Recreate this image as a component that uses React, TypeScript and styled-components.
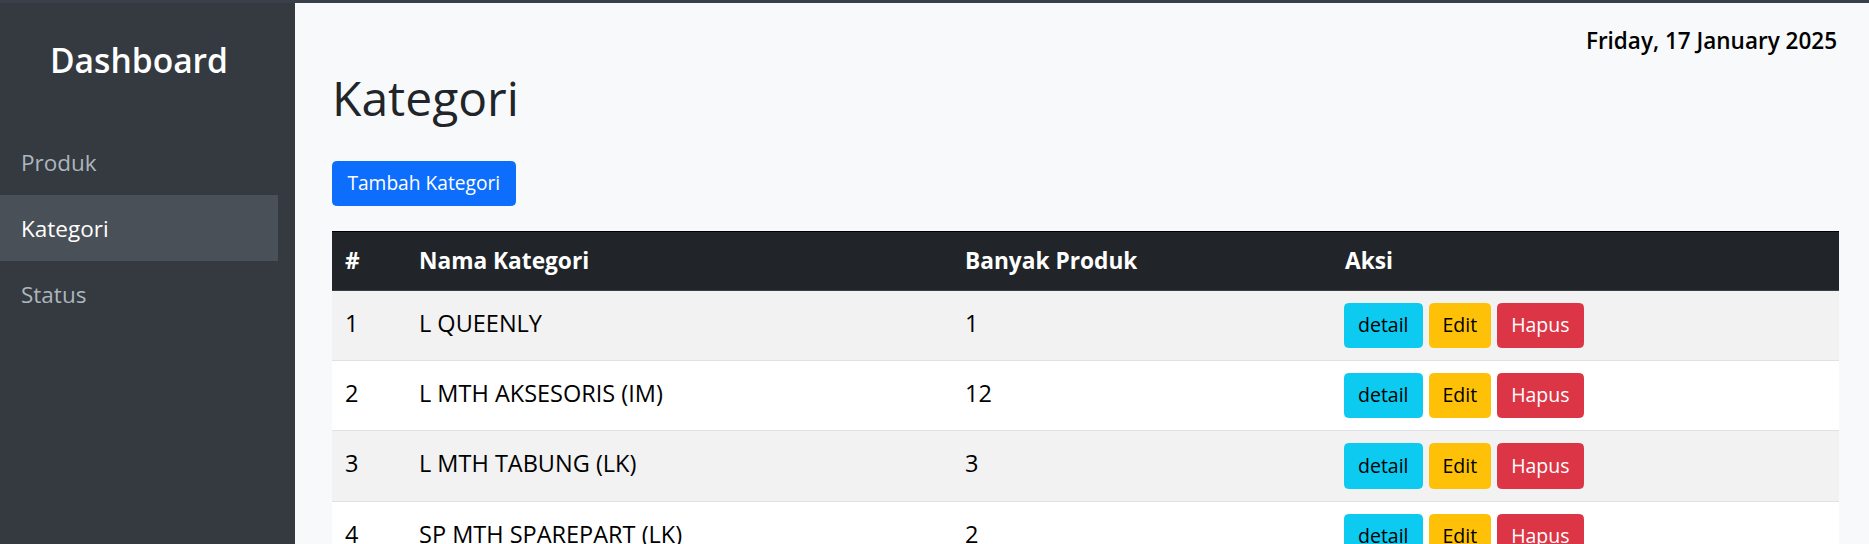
import React from "react";
import styled, { createGlobalStyle } from "styled-components";

const GlobalStyle = createGlobalStyle`
  * { box-sizing: border-box; }
  html, body { margin: 0; padding: 0; }
  body {
    font-family: "Open Sans", "Noto Sans", sans-serif;
    font-size: 19.2px;
    line-height: 1.5;
    color: #212529;
    background: #f8f9fa;
  }
`;

const Page = styled.div`
  display: flex;
  flex-direction: column;
  min-height: 100vh;
`;

const TopStrip = styled.div`
  height: 3px;
  background: #3a404a;
  flex: none;
`;

const Body = styled.div`
  display: flex;
  flex: 1;
`;

const Sidebar = styled.aside`
  width: 295px;
  flex: none;
  background: #343a40;
  padding: 34px 17px 0 0;
`;

const Brand = styled.h2`
  margin: 0 0 46px;
  height: 46px;
  font-size: 33.6px;
  line-height: 46px;
  font-weight: 600;
  color: #fff;
  text-align: center;
`;

const Nav = styled.nav`
  display: flex;
  flex-direction: column;
`;

const NavItem = styled.a<{ $active?: boolean }>`
  display: block;
  padding: 16px 0 14px 21px;
  font-size: 22.5px;
  line-height: 36px;
  text-decoration: none;
  color: ${(p) => (p.$active ? "#ffffff" : "#adb5bd")};
  background: ${(p) => (p.$active ? "#495057" : "transparent")};
`;

const Main = styled.main`
  flex: 1;
  min-width: 0;
  background: #f8f9fa;
  padding: 24px 30px 0 37px;
`;

const DateLine = styled.h5`
  margin: 0;
  text-align: right;
  font-size: 22.5px;
  line-height: 28.8px;
  font-weight: 600;
  color: #000;
  padding-right: 2px;
`;

const Title = styled.h1`
  margin: 13px 0 35px;
  font-size: 48px;
  line-height: 1.2;
  font-weight: 500;
  color: #212529;
`;

type Variant = "primary" | "info" | "warning" | "danger";
const variantColor: Record<Variant, string> = {
  primary: "#0d6efd",
  info: "#0dcaf0",
  warning: "#ffc107",
  danger: "#dc3545",
};

const Btn = styled.button<{ $variant: Variant }>`
  display: inline-block;
  font-family: inherit;
  font-size: 19.5px;
  line-height: 28.8px;
  padding: 7.2px 13px;
  border-radius: 4.5px;
  border: 1px solid ${(p) => variantColor[p.$variant]};
  background: ${(p) => variantColor[p.$variant]};
  color: ${(p) => (p.$variant === "primary" || p.$variant === "danger" ? "#fff" : "#000")};
  cursor: pointer;
`;

const AddButton = styled(Btn)`
  font-size: 19.2px;
  padding: 7px 14.4px;
  margin-bottom: 25px;
`;

const Table = styled.table`
  width: 100%;
  border-collapse: collapse;
  table-layout: fixed;
  border-top: 1px solid #000;
  font-size: 23.5px;
`;

const HeadCell = styled.th<{ $w?: number }>`
  width: ${(p) => (p.$w ? `${p.$w}px` : "auto")};
  text-align: left;
  background: #212529;
  color: #fff;
  font-size: 22.7px;
  font-weight: 700;
  padding: 14.5px 13px;
  line-height: 28.8px;
  border-bottom: 1px solid #3a3f44;
`;

const Row = styled.tr<{ $striped: boolean }>`
  background: ${(p) => (p.$striped ? "#f2f2f2" : "#ffffff")};
  border-bottom: 1px solid #dee2e6;
`;

const Cell = styled.td<{ $action?: boolean }>`
  padding: ${(p) => (p.$action ? "12px 13px 12px 12px" : "12px 13px 17px")};
  line-height: 36px;
  vertical-align: middle;
  color: #000;
`;

const Actions = styled.div`
  display: flex;
  gap: 6px;
`;

const rows = [
  { id: 1, name: "L QUEENLY", count: 1 },
  { id: 2, name: "L MTH AKSESORIS (IM)", count: 12 },
  { id: 3, name: "L MTH TABUNG (LK)", count: 3 },
  { id: 4, name: "SP MTH SPAREPART (LK)", count: 2 },
];

export default function App() {
  return (
    <>
      <GlobalStyle />
      <Page>
        <TopStrip />
        <Body>
          <Sidebar>
            <Brand>Dashboard</Brand>
            <Nav>
              <NavItem href="#">Produk</NavItem>
              <NavItem href="#" $active>
                Kategori
              </NavItem>
              <NavItem href="#">Status</NavItem>
            </Nav>
          </Sidebar>
          <Main>
            <DateLine>Friday, 17 January 2025</DateLine>
            <Title>Kategori</Title>
            <AddButton $variant="primary">Tambah Kategori</AddButton>
            <Table>
              <thead>
                <tr>
                  <HeadCell $w={74}>#</HeadCell>
                  <HeadCell $w={546}>Nama Kategori</HeadCell>
                  <HeadCell $w={380}>Banyak Produk</HeadCell>
                  <HeadCell>Aksi</HeadCell>
                </tr>
              </thead>
              <tbody>
                {rows.map((r, i) => (
                  <Row key={r.id} $striped={i % 2 === 0}>
                    <Cell>{r.id}</Cell>
                    <Cell>{r.name}</Cell>
                    <Cell>{r.count}</Cell>
                    <Cell $action>
                      <Actions>
                        <Btn $variant="info">detail</Btn>
                        <Btn $variant="warning">Edit</Btn>
                        <Btn $variant="danger">Hapus</Btn>
                      </Actions>
                    </Cell>
                  </Row>
                ))}
              </tbody>
            </Table>
          </Main>
        </Body>
      </Page>
    </>
  );
}
